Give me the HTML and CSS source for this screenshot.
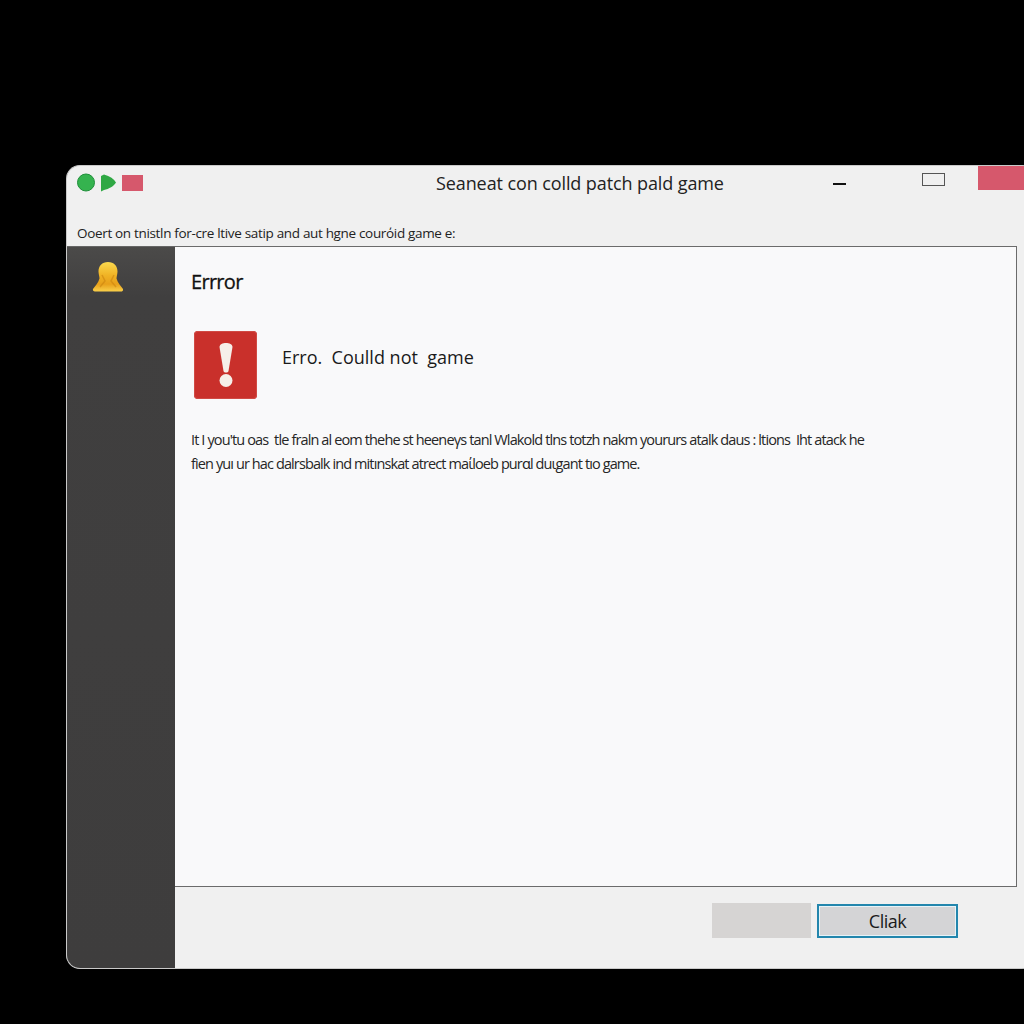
FILE: index.html
```html
<!DOCTYPE html>
<html lang="en">
<head>
<meta charset="utf-8">
<title>Error</title>
<link rel="stylesheet" href="styles.css">
</head>
<body>
<div class="window">
  <header class="header">
    <div class="titlebar">
      <div class="lights">
        <svg class="light-icons" width="58" height="20" viewBox="0 0 58 20">
          <circle cx="9" cy="9.500" r="8.500" fill="#35b34f" stroke="#1f8f3a" stroke-width="1"/>
          <path d="M24 3 L27 1.500 C33 3 37 6 39 9.500 C37 13 32 16 27 17 L24 18.500 Z" fill="#2fa844"/>
          <rect x="45" y="2" width="21" height="16" fill="#d6586c"/>
        </svg>
      </div>
      <div class="title">Seaneat con colld patch pald game</div>
      <div class="minimize"></div>
      <div class="restore"></div>
      <div class="close"></div>
    </div>
    <div class="subtitle">Ooert on tnistln for-cre ltive satip and aut hgne courόid game e:</div>
  </header>
  <div class="body">
    <aside class="sidebar">
      <svg class="bell" width="32" height="32" viewBox="0 0 32 32">
        <defs>
          <linearGradient id="bellFill" x1="0" y1="0" x2="0" y2="1">
            <stop offset="0" stop-color="#fbd94e"/>
            <stop offset="0.45" stop-color="#f0b325"/>
            <stop offset="0.75" stop-color="#e8a01a"/>
            <stop offset="1" stop-color="#fad04a"/>
          </linearGradient>
        </defs>
        <path d="M16 1 C22 1 25.500 5 25.500 10.500 C25.500 13 24.500 15.500 24.500 17.500 C25.500 21.500 29 25 31 28 C31.500 30 30 30.500 29 30.500 L3 30.500 C1.500 30.500 .5 29.500 1 28 C3 25 6.500 21.500 7.500 17.500 C7.500 15.500 6.500 13 6.500 10.500 C6.500 5 10 1 16 1 Z" fill="url(#bellFill)"/>
        <path d="M8 26 L13 20 L10 14 M24 26 L19 20 L22 14" fill="none" stroke="#c9820f" stroke-width="1.500" opacity="0.550"/>
      </svg>
    </aside>
    <div class="main">
      <section class="content">
        <h1 class="heading">Errror</h1>
        <div class="alert">
          <div class="alert-icon">
            <svg width="16" height="46" viewBox="0 0 16 46">
              <path d="M1.500 5 C1.500 -0.500 14.500 -0.500 14.500 5 L10.500 29 C10 31 6 31 5.500 29 Z" fill="#f6efe9"/>
              <circle cx="8" cy="38.500" r="6.500" fill="#f6efe9"/>
            </svg>
          </div>
          <p class="alert-text">Erro.&nbsp; Coulld not&nbsp; game</p>
        </div>
        <p class="desc">
          <span class="line line-one">It I you'tu oas&nbsp; tle fraln al eom thehe st heeneγs tanl Wlakold tlns totzh nakm yoururs atalk daus : ltions&nbsp; Iht atack he</span>
          <span class="line line-two">fien yuı ur hac dalrsbalk ind mitınskat atrect maίloeb purɑl duιgant tıo game.</span>
        </p>
      </section>
      <footer class="footer">
        <div class="btn-blank"></div>
        <button class="btn-primary" type="button">Cliak</button>
      </footer>
    </div>
  </div>
</div>
</body>
</html>
```

FILE: styles.css
```css
* {
  box-sizing: border-box;
}

html,
body {
  margin: 0;
  height: 100%;
}

body {
  background: #000;
  overflow: hidden;
  padding: 165px 0 0 66px;
  font-family: "Open Sans", "Noto Sans", "Liberation Sans", sans-serif;
  color: #161616;
}

.window {
  width: 970px;
  height: 804px;
  background: #f0f0f0;
  border: 1px solid #c9c9c9;
  border-right: 0;
  border-radius: 14px;
  overflow: hidden;
  display: flex;
  flex-direction: column;
}

.header {
  height: 80px;
  flex: none;
  display: flex;
  flex-direction: column;
}

.titlebar {
  height: 50px;
  display: flex;
  align-items: flex-start;
}

.lights {
  width: 76px;
  padding: 7px 0 0 10px;
  flex: none;
}

.light-icons {
  display: block;
  overflow: visible;
}

.title {
  margin: 5px 0 0 293px;
  width: 290px;
  font-size: 18px;
  line-height: 24px;
  white-space: nowrap;
  letter-spacing: -0.1px;
  color: #222;
}

.minimize {
  width: 13px;
  height: 2px;
  margin: 17px 0 0 107px;
  background: #111;
}

.restore {
  width: 23px;
  height: 13px;
  margin: 7px 0 0 76px;
  border: 1px solid #555;
}

.close {
  width: 46px;
  height: 25px;
  margin: -1px 0 0 33px;
  background: #d6586c;
}

.subtitle {
  margin-top: 7px;
  padding-left: 10px;
  font-size: 13.500px;
  line-height: 20px;
  letter-spacing: -0.33px;
  white-space: nowrap;
  color: #222;
}

.body {
  flex: 1;
  display: flex;
  min-height: 0;
}

.sidebar {
  width: 108px;
  flex: none;
  background: linear-gradient(#4b4a49 0, #403f3f 50px, #3e3d3d 100%);
  border-top: 1px solid #666;
  padding: 14px 0 0 25px;
}

.bell {
  display: block;
}

.main {
  flex: 1;
  display: flex;
  flex-direction: column;
  min-width: 0;
}

.content {
  width: 842px;
  height: 641px;
  flex: none;
  background: #f9f9fa;
  border: 1px solid #6b6b6b;
  border-left: 0;
  padding: 21px 0 0 16px;
}

.heading {
  margin: 0;
  font-size: 20px;
  line-height: 28px;
  font-weight: 400;
  letter-spacing: -0.7px;
  color: #111;
  -webkit-text-stroke: 0.3px #111;
}

.alert {
  display: flex;
  align-items: center;
  margin: 35px 0 0 3px;
}

.alert-icon {
  width: 63px;
  height: 68px;
  background: #c9302b;
  border-radius: 4px;
  display: flex;
  align-items: center;
  justify-content: center;
  flex: none;
  box-shadow: inset 0 0 0 1px #d04a44;
}

.alert-text {
  margin: -16px 0 0 25px;
  font-size: 18px;
  line-height: 24px;
  letter-spacing: 0;
  color: #1a1a1a;
}

.desc {
  margin: 29px 0 0;
  font-size: 14.500px;
  line-height: 24px;
  color: #262626;
}

.line {
  display: block;
  white-space: nowrap;
}

.line-one {
  letter-spacing: -0.87px;
}

.line-two {
  letter-spacing: -0.89px;
}

.footer {
  flex: 1;
  display: flex;
  align-items: flex-start;
  padding: 16px 0 0 537px;
  gap: 6px;
}

.btn-blank {
  width: 99px;
  height: 35px;
  background: #d6d4d3;
}

.btn-primary {
  width: 141px;
  height: 34px;
  margin-top: 1px;
  padding: 0;
  background: #d4d4d6;
  border: 2px solid #2386ad;
  box-shadow: inset 0 0 0 1px #e6f3f8;
  font-family: inherit;
  font-size: 18px;
  letter-spacing: -0.5px;
  color: #1a1a1a;
}
```
